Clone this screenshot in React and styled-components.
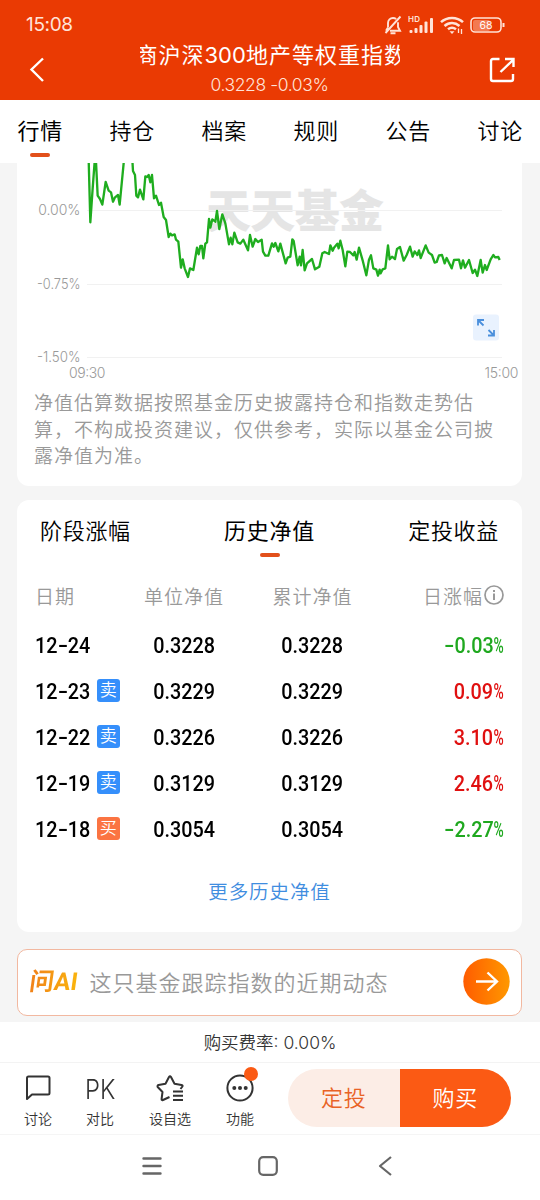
import React from 'react';
import styled, { createGlobalStyle } from 'styled-components';

const GlobalStyle = createGlobalStyle`
  * {
    box-sizing: border-box;
  }
  body {
    margin: 0;
    background: #f5f5f5;
    font-family: 'Inter', 'Noto Sans CJK SC', sans-serif;
    font-weight: 350;
    color: #000;
  }
  svg {
    display: block;
    flex: none;
  }
`;

const Page = styled.div`
  width: 540px;
  height: 1200px;
  display: flex;
  flex-direction: column;
  overflow: hidden;
`;

const Top = styled.header`
  height: 100px;
  flex: none;
  background: #ea3a03;
  color: #fff;
`;

const StatusBar = styled.div`
  height: 40px;
  padding: 9px 35px 0 26px;
  display: flex;
  justify-content: space-between;
  color: #ffe3d8;
`;

const Time = styled.span`
  font-size: 19px;
  line-height: 32px;
  font-weight: 400;
  letter-spacing: -0.35px;
`;

const StatusIcons = styled.div`
  display: flex;
  height: 32px;
  align-items: center;
  gap: 6px;
`;

const TitleBar = styled.div`
  height: 60px;
  padding: 0 24px 0 28px;
  display: flex;
  justify-content: space-between;
  align-items: center;
`;

const TitleBox = styled.div`
  width: 260px;
  margin-top: -4px;
  margin-left: 5px;
  text-align: center;
`;

const Title = styled.div`
  overflow: hidden;
  white-space: nowrap;
  text-align: left;
  text-indent: -4px;
  font-size: 22px;
  line-height: 32px;
  letter-spacing: 1px;
  font-weight: 400;
  span {
    letter-spacing: 0;
  }
`;

const SubTitle = styled.div`
  margin-top: 1px;
  font-size: 17.5px;
  line-height: 26px;
  letter-spacing: -0.4px;
  color: #ffe3d8;
`;

const Tabs = styled.nav`
  height: 63px;
  flex: none;
  padding: 12px 17px 0 17.5px;
  display: flex;
  justify-content: space-between;
  background: #fff;
`;

const Tab = styled.div`
  display: flex;
  flex-direction: column;
  align-items: center;
  font-size: 22px;
  line-height: 39px;
  letter-spacing: 0.7px;
  font-weight: ${({ $active }) => ($active ? 400 : 350)};
  &::after {
    content: '';
    width: 20px;
    height: 4px;
    margin-top: 2px;
    border-radius: 2px;
    background: ${({ $active }) => ($active ? '#e2501a' : 'transparent')};
  }
`;

const Content = styled.main`
  height: 859px;
  flex: none;
  padding: 0 18px 0 17px;
`;

const ChartCard = styled.section`
  height: 323px;
  background: #fff;
  border-radius: 0 0 12px 12px;
`;

const Disclaimer = styled.p`
  width: 465px;
  margin: 0 0 0 17px;
  padding-top: 5px;
  font-size: 19px;
  line-height: 26.6px;
  letter-spacing: 1px;
  color: #999;
`;

const HistoryCard = styled.section`
  height: 432px;
  margin-top: 14px;
  padding: 12px 18px 0;
  background: #fff;
  border-radius: 12px;
`;

const SubTabs = styled.div`
  display: flex;
  justify-content: space-between;
  padding: 0 5px;
  height: 59px;
`;

const Row = styled.div`
  display: grid;
  grid-template-columns: 85px 128px 129px 1fr;
  align-items: center;
  height: ${({ $head }) => ($head ? 48 : 46)}px;
  margin-bottom: ${({ $head }) => ($head ? 3 : 0)}px;
  & > * {
    justify-self: center;
  }
  & > :first-child {
    justify-self: start;
  }
  & > :last-child {
    justify-self: end;
  }
`;

const HeadCell = styled.span`
  display: flex;
  align-items: center;
  gap: 1px;
  white-space: nowrap;
  font-size: 19px;
  letter-spacing: 1px;
  color: #999;
`;

const DateCell = styled.span`
  display: flex;
  align-items: center;
`;

// condensed digits: the box keeps its full width, so each column picks its origin
const Figure = styled.span`
  font-family: 'Roboto', sans-serif;
  font-weight: 500;
  font-size: 22.5px;
  white-space: nowrap;
  transform: scaleX(0.88);
  transform-origin: ${({ $origin }) => $origin || 'center'};
  color: ${({ $color }) => $color || '#000'};
`;

const Dash = styled.span`
  display: inline-block;
  margin: 0 2px;
  transform: scaleX(1.5);
`;

const Percent = styled.span`
  display: inline-block;
  margin-right: -4.5px;
  transform: scaleX(0.7);
  transform-origin: left;
`;

const Tag = styled.span`
  width: 23px;
  height: 23px;
  margin: -2px 0 0 -1px;
  border-radius: 3px;
  background: ${({ $buy }) => ($buy ? '#fb7442' : '#358ffb')};
  color: #fff;
  font-size: 17px;
  line-height: 22px;
  text-align: center;
`;

const More = styled.div`
  margin-top: 25px;
  text-align: center;
  font-size: 19.5px;
  line-height: 30px;
  letter-spacing: 0.9px;
  color: #3f8de0;
`;

const AskBox = styled.div`
  height: 67px;
  margin-top: 17px;
  padding: 0 11px 2px 11px;
  display: flex;
  align-items: center;
  background: #fff;
  border: 1px solid #f2b8a0;
  border-radius: 10px;
`;

const AskLogo = styled.span`
  width: 52px;
  margin-top: -4px;
  padding-left: 1px;
  font-family: 'Roboto', 'Noto Sans CJK SC', sans-serif;
  font-size: 24.5px;
  font-weight: 700;
  white-space: nowrap;
  transform: skewX(-8deg);
  background: linear-gradient(90deg, #f07f19, #fbb80c);
  background-clip: text;
  color: transparent;
`;

const AskText = styled.span`
  flex: 1;
  margin: -2px 0 0 8.5px;
  font-size: 22px;
  letter-spacing: 1px;
  color: #999;
`;

const FeeBar = styled.div`
  height: 41px;
  flex: none;
  border-bottom: 1px solid #f3f3f3;
  background: #fff;
  text-align: center;
  font-size: 17.5px;
  line-height: 41px;
  color: #333;
`;

const BottomBar = styled.div`
  height: 72px;
  flex: none;
  padding: 6px 29px 0 7px;
  display: flex;
  background: #fff;
  border-bottom: 1px solid #f5f5f5;
`;

const Action = styled.div`
  position: relative;
  width: ${({ $wide }) => ($wide ? 78 : 62)}px;
  display: flex;
  flex-direction: column;
  align-items: center;
  font-size: 14px;
  line-height: 20px;
  color: #333;
  svg {
    margin: 4px 0 6px;
  }
`;

const PkMark = styled.span`
  height: 40px;
  font-size: 27px;
  line-height: 41px;
  transform: scaleX(0.88);
`;

const Dot = styled.span`
  position: absolute;
  top: -2px;
  right: 13px;
  width: 14px;
  height: 14px;
  border-radius: 50%;
  background: #fb5a14;
`;

const Buttons = styled.div`
  margin-left: auto;
  width: 223px;
  height: 58px;
  display: flex;
  border-radius: 29px;
  overflow: hidden;
`;

const Button = styled.div`
  flex: 1;
  text-align: center;
  font-size: 22px;
  line-height: 59px;
  letter-spacing: 0.8px;
  color: ${({ $primary }) => ($primary ? '#fff' : '#e96225')};
  background: ${({ $primary }) => ($primary ? '#fb5a14' : '#fcede6')};
`;

const SystemNav = styled.div`
  flex: 1;
  padding: 0 148px 3px 142px;
  display: flex;
  justify-content: space-between;
  align-items: center;
  background: #fff;
`;

const HomeKey = styled.svg`
  margin-right: 4px;
`;

const GREEN = '#1fa81f';
const RED = '#e01010';

const tabs = ['行情', '持仓', '档案', '规则', '公告', '讨论'];

const rows = [
  { month: 12, day: 24, unit: '0.3228', total: '0.3228', change: -0.03 },
  { month: 12, day: 23, tag: '卖', unit: '0.3229', total: '0.3229', change: 0.09 },
  { month: 12, day: 22, tag: '卖', unit: '0.3226', total: '0.3226', change: 3.1 },
  { month: 12, day: 19, tag: '卖', unit: '0.3129', total: '0.3129', change: 2.46 },
  { month: 12, day: 18, tag: '买', unit: '0.3054', total: '0.3054', change: -2.27 },
];

// one unit = 1/3 px
const trend =
  '215,-10 220,178 227,76 233,-4 237,-4 242,98 249,108 256,125 266,57 275,83 282,88 288,116 294,103 303,96 308,125 321,-10 346,-10 348,24 354,36 358,98 363,103 369,80 379,109 385,40 390,42 395,36 400,58 405,36 411,106 417,98 426,126 432,119 440,162 447,171 455,222 460,212 465,217 473,214 477,230 484,236 492,314 497,289 503,316 513,342 519,316 529,321 540,254 545,274 550,249 555,249 559,286 565,242 570,238 576,168 580,194 586,169 595,176 600,144 607,198 616,154 625,181 636,244 641,224 646,244 652,209 662,238 670,242 679,230 693,262 699,216 707,251 715,228 723,237 734,230 738,266 745,278 754,278 765,241 770,251 775,240 784,265 790,242 806,301 812,284 820,281 826,229 830,234 842,307 848,281 852,307 857,261 863,322 870,301 885,288 894,319 907,311 916,271 923,267 936,273 940,247 947,263 951,254 961,242 965,256 970,233 977,261 985,310 991,266 999,267 1009,277 1013,267 1019,290 1026,254 1038,296 1048,337 1056,290 1062,277 1069,316 1078,320 1083,338 1088,320 1091,331 1097,319 1105,316 1113,247 1118,289 1125,281 1134,288 1140,258 1149,252 1160,293 1169,276 1179,251 1187,281 1193,265 1201,276 1206,262 1211,285 1226,247 1235,269 1245,276 1253,299 1259,297 1266,277 1275,276 1283,301 1289,285 1304,316 1311,291 1326,290 1332,316 1338,292 1344,314 1356,291 1367,330 1374,320 1381,339 1391,291 1397,329 1404,306 1409,321 1421,289 1429,276 1434,283 1444,282 1448,291';

const BellOff = () => (
  <svg width='18' height='20' viewBox='0 0 18 20' fill='none' stroke='#ffe3d8' strokeWidth='1.9'>
    <path d='M4 12.5V8c0-3 2.2-5 5-5 1.200 0 2.300.4 3.200 1M14 7.200V12l2 3.700H6' />
    <path d='M4 12.500L2 15.700M1.500 18L16.500 1.500M6.500 18.300h5' />
  </svg>
);

const Signal = () => (
  <svg width='26' height='20' viewBox='0 0 26 20' fill='#ffe3d8'>
    <text x='0' y='6.500' fontSize='8' fontWeight='600' textLength='12' fontFamily='Inter, sans-serif'>
      HD
    </text>
    <rect x='1.500' y='15' width='3' height='3' rx='1' />
    <rect x='6.500' y='13' width='3' height='5' rx='1' />
    <rect x='11.500' y='10' width='3' height='8' rx='1' />
    <rect x='16.500' y='6.500' width='3' height='11.500' rx='1' />
    <rect x='22' y='3' width='3' height='15' rx='1' />
  </svg>
);

const Wifi = () => (
  <svg width='24' height='20' viewBox='0 0 24 20' fill='none' stroke='#ffe3d8' strokeWidth='2.500'>
    <path d='M1 7.200C7 1.500 17 1.500 23 7.200M4.500 11c4.500-4 10.500-4 15 0M8 14.300c2.500-2 5.500-2 8 0' />
    <path d='M9.500 16.300h5L12 19z' fill='#ffe3d8' stroke='none' />
    <path d='M18.500 13.500V18M21.500 14v5' strokeWidth='1.300' />
  </svg>
);

const Battery = () => (
  <svg width='35' height='17' viewBox='0 0 35 17'>
    <rect x='3' y='3' width='17' height='11' rx='2' fill='#f37a51' />
    <rect x='1' y='1' width='30' height='14' rx='4' fill='none' stroke='#ffe3d8' strokeWidth='1.600' />
    <path d='M33.500 6v4' stroke='#ffe3d8' strokeWidth='2' />
    <text x='16' y='12' fontSize='10.500' fontWeight='400' fill='#fff' textAnchor='middle' fontFamily='Inter, sans-serif'>
      68
    </text>
  </svg>
);

const BackIcon = () => (
  <svg width='18' height='26' viewBox='0 0 18 26' fill='none' stroke='#fff' strokeWidth='2.400'>
    <path d='M15 1.500L3.500 12.500L15 24' />
  </svg>
);

const ShareIcon = () => (
  <svg width='28' height='28' viewBox='0 0 28 28' fill='none' stroke='#fff' strokeWidth='2.400'>
    <path d='M11.500 3H5Q3 3 3 5V23Q3 25 5 25H23Q25 25 25 23V18' />
    <path d='M12.500 16L25 4M17 3H25.500V11' />
  </svg>
);

const Chart = () => (
  <svg width='505' height='223' viewBox='0 0 505 223'>
    <g fontFamily="'Noto Sans CJK SC', sans-serif" fontWeight='900' fontSize='45' fill='#e5e5e5'>
      <text x='189' y='65' textLength='178'>
        天天基金
      </text>
    </g>
    <g stroke='#f1f1f1'>
      <path d='M70 47.500H485M70 121.500H485M70 194.500H485' />
    </g>
    <g fontFamily='Inter, sans-serif' fontSize='14' fill='#999'>
      <text x='63.500' y='52' textAnchor='end'>0.00%</text>
      <text x='20' y='126' textLength='43.500' lengthAdjust='spacingAndGlyphs'>-0.75%</text>
      <text x='20' y='199' textLength='43.500' lengthAdjust='spacingAndGlyphs'>-1.50%</text>
      <text x='52' y='214.500' textLength='36.500'>09:30</text>
      <text x='467.500' y='214.500' textLength='34'>15:00</text>
    </g>
    <g transform='scale(0.33333)'>
      <polyline points={trend} fill='none' stroke='#1fad1f' strokeWidth='7' strokeLinejoin='round' />
    </g>
    <rect x='456' y='151.500' width='26' height='26' rx='3' fill='#e9f2fe' />
    <path
      d='M461 162.500V157h6M461 157l5.500 5.500M477 167v5.500h-6M477 172.500l-5.500-5.500'
      fill='none'
      stroke='#4a8fdc'
      strokeWidth='1.800'
    />
  </svg>
);

const InfoIcon = () => (
  <svg width='20' height='20' viewBox='0 0 20 20' fill='none' stroke='#999' strokeWidth='1.700'>
    <circle cx='10' cy='10' r='9' />
    <path d='M10 8.500V15M10 5v2' strokeWidth='2' />
  </svg>
);

const GoIcon = () => (
  <svg width='47' height='47' viewBox='0 0 47 47'>
    <defs>
      <linearGradient id='go'>
        <stop offset='0' stopColor='#ff5c00' />
        <stop offset='1' stopColor='#ff9800' />
      </linearGradient>
    </defs>
    <circle cx='23.500' cy='23.500' r='23.200' fill='url(#go)' />
    <path d='M13 23.500H33.500M24.500 14.500l9.500 9-9.500 9' fill='none' stroke='#fff' strokeWidth='2.400' />
  </svg>
);

const ChatIcon = () => (
  <svg width='30' height='30' viewBox='0 0 30 30' fill='none' stroke='#333' strokeWidth='2'>
    <path d='M4 26V5Q4 3.500 5.500 3.500H25Q26.500 3.500 26.500 5V20Q26.500 21.500 25 21.500H9Z' strokeLinejoin='round' />
  </svg>
);

const StarIcon = () => (
  <svg width='30' height='30' viewBox='0 0 30 30' fill='none' stroke='#333' strokeWidth='2'>
    <path
      d='M14.500 24L8 27Q6.500 27.500 6.600 26L7.500 19L2.700 14Q2 12.500 3.500 12L10.500 10.700L14 4Q15 2.500 16 4L19.500 10.700L26.500 12Q28.500 12.500 27 14L25.500 16'
      strokeLinejoin='round'
    />
    <path d='M18 18.500H28M18 22.700H28M18 27H28' />
  </svg>
);

const MoreIcon = () => (
  <svg width='30' height='30' viewBox='0 0 30 30' fill='#333'>
    <circle cx='15' cy='15' r='12.600' fill='none' stroke='#333' strokeWidth='2' />
    <circle cx='9.300' cy='15' r='2' />
    <circle cx='15' cy='15' r='2' />
    <circle cx='20.700' cy='15' r='2' />
  </svg>
);

export default function App() {
  return (
    <Page>
      <GlobalStyle />
      <Top>
        <StatusBar>
          <Time>15:08</Time>
          <StatusIcons>
            <BellOff />
            <Signal />
            <Wifi />
            <Battery />
          </StatusIcons>
        </StatusBar>
        <TitleBar>
          <BackIcon />
          <TitleBox>
            <Title>
              商沪深<span>300</span>地产等权重指数
            </Title>
            <SubTitle>0.3228 -0.03%</SubTitle>
          </TitleBox>
          <ShareIcon />
        </TitleBar>
      </Top>
      <Tabs>
        {tabs.map((tab, i) => (
          <Tab key={tab} $active={i === 0}>
            {tab}
          </Tab>
        ))}
      </Tabs>
      <Content>
        <ChartCard>
          <Chart />
          <Disclaimer>
            净值估算数据按照基金历史披露持仓和指数走势估算，不构成投资建议，仅供参考，实际以基金公司披露净值为准。
          </Disclaimer>
        </ChartCard>
        <HistoryCard>
          <SubTabs>
            <Tab>阶段涨幅</Tab>
            <Tab $active>历史净值</Tab>
            <Tab>定投收益</Tab>
          </SubTabs>
          <Row $head>
            <HeadCell>日期</HeadCell>
            <HeadCell>单位净值</HeadCell>
            <HeadCell>累计净值</HeadCell>
            <HeadCell>
              日涨幅
              <InfoIcon />
            </HeadCell>
          </Row>
          {rows.map((row) => (
            <Row key={row.day}>
              <DateCell>
                <Figure $origin='left'>
                  {row.month}
                  <Dash>-</Dash>
                  {row.day}
                </Figure>
                {row.tag && <Tag $buy={row.tag === '买'}>{row.tag}</Tag>}
              </DateCell>
              <Figure>{row.unit}</Figure>
              <Figure>{row.total}</Figure>
              <Figure $origin='right' $color={row.change < 0 ? GREEN : RED}>
                {row.change < 0 && <Dash>-</Dash>}
                {Math.abs(row.change).toFixed(2)}
                <Percent>%</Percent>
              </Figure>
            </Row>
          ))}
          <More>更多历史净值</More>
        </HistoryCard>
        <AskBox>
          <AskLogo>问AI</AskLogo>
          <AskText>这只基金跟踪指数的近期动态</AskText>
          <GoIcon />
        </AskBox>
      </Content>
      <FeeBar>购买费率: 0.00%</FeeBar>
      <BottomBar>
        <Action>
          <ChatIcon />
          讨论
        </Action>
        <Action>
          <PkMark>PK</PkMark>
          对比
        </Action>
        <Action $wide>
          <StarIcon />
          设自选
        </Action>
        <Action>
          <MoreIcon />
          功能
          <Dot />
        </Action>
        <Buttons>
          <Button>定投</Button>
          <Button $primary>购买</Button>
        </Buttons>
      </BottomBar>
      <SystemNav>
        <svg width='20' height='20' viewBox='0 0 20 20' stroke='#666' strokeWidth='2.400' strokeLinecap='round'>
          <path d='M1.500 2.500h17M1.500 10h17M1.500 17.500h17' />
        </svg>
        <HomeKey width='20' height='20' viewBox='0 0 20 20' fill='none' stroke='#666' strokeWidth='2.200'>
          <rect x='1.200' y='1.200' width='17.600' height='17.600' rx='4' />
        </HomeKey>
        <svg width='14' height='20' viewBox='0 0 14 20' fill='none' stroke='#666' strokeWidth='2.200'>
          <path d='M13 1L2 10l11 9' strokeLinejoin='round' />
        </svg>
      </SystemNav>
    </Page>
  );
}
